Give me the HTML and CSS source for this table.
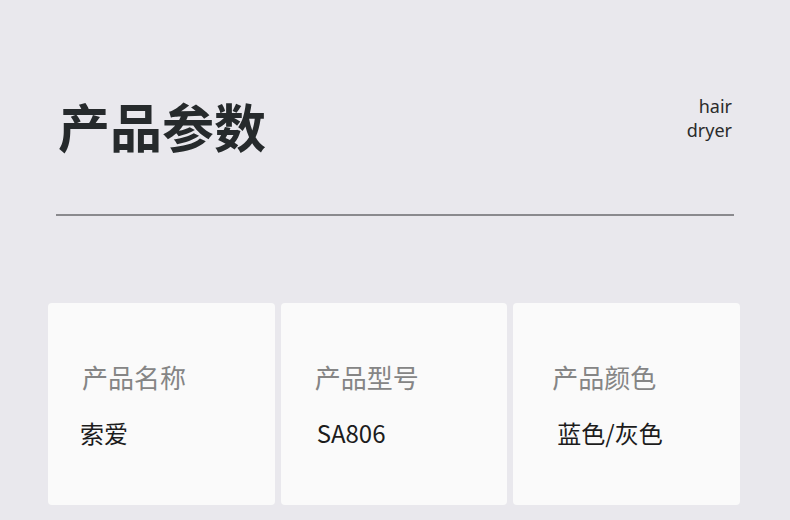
FILE: index.html
```html
<!DOCTYPE html>
<html lang="zh-CN">
<head>
  <meta charset="UTF-8">
  <title>产品参数</title>
  <link rel="stylesheet" href="styles.css">
</head>
<body>
  <div class="page">
    <div class="header">
      <h1 class="title">产品参数</h1>
      <div class="tag">hair<br>dryer</div>
    </div>
    <div class="rule"></div>

    <div class="cards">
      <div class="card">
        <div class="label">产品名称</div>
        <div class="value">索爱</div>
      </div>
      <div class="card card-mid">
        <div class="label">产品型号</div>
        <div class="value">SA806</div>
      </div>
      <div class="card card-last">
        <div class="label">产品颜色</div>
        <div class="value">蓝色/灰色</div>
      </div>
    </div>
  </div>
</body>
</html>
```

FILE: styles.css
```css
html, body {
  margin: 0;
  padding: 0;
}

body {
  background: #e9e8ed;
  font-family: "Noto Sans CJK SC", "Noto Sans", sans-serif;
  color: #222;
}

.page {
  width: 790px;
  height: 520px;
  overflow: hidden;
}

.header {
  display: flex;
  justify-content: space-between;
  align-items: flex-start;
  padding: 92px 58px 0 58px;
  height: 122px;
}

.title {
  margin: 0;
  font-size: 52px;
  line-height: 68px;
  font-weight: 700;
  color: #262a2c;
}

.tag {
  margin-top: 2px;
  text-align: right;
  font-size: 18px;
  line-height: 24px;
  color: #2b2b2b;
  font-family: "Noto Sans", sans-serif;
}

.rule {
  margin: 0 56px;
  height: 2px;
  background: #8a8a8e;
}

.cards {
  display: grid;
  grid-template-columns: repeat(3, 1fr);
  gap: 6px;
  margin: 87px 50px 0 48px;
}

.card {
  height: 202px;
  background: #fafafa;
  border-radius: 4px;
  padding: 55px 0 0 34px;
  box-sizing: border-box;
}

.label {
  font-size: 26px;
  line-height: 38px;
  color: #858585;
}

.value {
  margin-top: 20px;
  margin-left: -2px;
  font-size: 24px;
  line-height: 34px;
  color: #1c1c1c;
}

.card-mid .value {
  margin-left: 2px;
}

.card-last {
  padding-left: 39px;
}

.card-last .value {
  margin-left: 5px;
}
```
